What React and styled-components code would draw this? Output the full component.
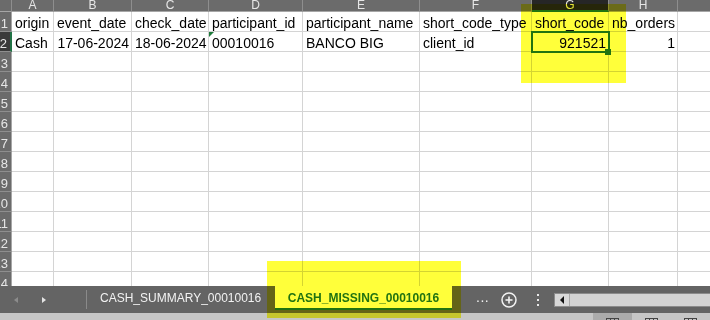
import React from "react";
import styled, { createGlobalStyle, css } from "styled-components";

const GREEN = "#217346";

const GlobalStyle = createGlobalStyle`
  html, body {
    margin: 0;
    padding: 0;
    background: #fff;
  }
  body {
    font-family: "Liberation Sans", Arial, sans-serif;
  }
`;

const Screen = styled.div`
  position: relative;
  width: 710px;
  height: 320px;
  overflow: hidden;
  display: flex;
  flex-direction: column;
  background: #fff;
`;

const Sheet = styled.div`
  flex: none;
  height: 286px;
  display: grid;
  grid-template-columns: 12px 42px 78px 77px 94px 117px 112px 77px 69px 80px;
  grid-template-rows: 12px;
  grid-auto-rows: 20px;
  overflow: hidden;
`;

const Corner = styled.div`
  background: #6b6b6b;
  border-right: 1px solid #8e8e8e;
  border-bottom: 1px solid #a6a6a6;
  box-sizing: border-box;
`;

const ColHead = styled.div`
  box-sizing: border-box;
  background: ${(p) => (p.$active ? "#262626" : "#6b6b6b")};
  color: #e6e6e6;
  font-size: 12px;
  line-height: 10px;
  text-align: center;
  overflow: hidden;
  border-right: 1px solid #8e8e8e;
  border-bottom: ${(p) => (p.$active ? `2px solid ${GREEN}` : "1px solid #a6a6a6")};
`;

const RowHead = styled.div`
  box-sizing: border-box;
  display: flex;
  justify-content: flex-end;
  padding: 3px 3px 0 0;
  background: ${(p) => (p.$active ? "#3a3a3a" : "#6b6b6b")};
  color: #e6e6e6;
  font-size: 13px;
  line-height: 17px;
  white-space: nowrap;
  overflow: hidden;
  border-bottom: 1px solid #8e8e8e;
  border-right: ${(p) => (p.$active ? `2px solid ${GREEN}` : "1px solid #a6a6a6")};
`;

const Cell = styled.div`
  position: relative;
  box-sizing: border-box;
  padding: 3px 2px 0 3px;
  border-right: 1px solid #d4d4d4;
  border-bottom: 1px solid #d4d4d4;
  font-size: 14px;
  line-height: 17px;
  color: #000;
  white-space: nowrap;
  text-align: ${(p) => (p.$num ? "right" : "left")};

  ${(p) =>
    p.$flag &&
    css`
      &::before {
        content: "";
        position: absolute;
        left: 0;
        top: 0;
        border-top: 5px solid #1e7a3c;
        border-right: 5px solid transparent;
      }
    `}

  ${(p) =>
    p.$selected &&
    css`
      z-index: 2;
      &::after {
        content: "";
        position: absolute;
        left: -1px;
        top: -1px;
        right: -2px;
        bottom: -2px;
        border: 2px solid ${GREEN};
      }
      &::before {
        content: "";
        position: absolute;
        right: -3px;
        bottom: -4px;
        width: 6px;
        height: 6px;
        background: ${GREEN};
        z-index: 1;
      }
    `}
`;

const Highlight = styled.div`
  position: absolute;
  left: ${(p) => p.$x}px;
  top: ${(p) => p.$y}px;
  width: ${(p) => p.$w}px;
  height: ${(p) => p.$h}px;
  background: #ffff3a;
  mix-blend-mode: multiply;
  pointer-events: none;
  z-index: 10;
`;

const TabBar = styled.div`
  flex: none;
  height: 27px;
  background: #646464;
  display: flex;
  align-items: center;
`;

const NavArea = styled.div`
  width: 86px;
  height: 27px;
  display: flex;
  align-items: center;
  gap: 24px;
  padding-left: 14px;
  box-sizing: border-box;
`;

const NavArrow = styled.span`
  width: 0;
  height: 0;
  border-top: 3.5px solid transparent;
  border-bottom: 3.5px solid transparent;
  ${(p) =>
    p.$dir === "left"
      ? css`border-right: 4px solid ${p.$dim ? "#8c8c8c" : "#e4e4e4"};`
      : css`border-left: 4px solid ${p.$dim ? "#8c8c8c" : "#e4e4e4"};`}
`;

const Divider = styled.span`
  width: 1px;
  height: 19px;
  background: #8a8a8a;
  align-self: flex-start;
  margin-top: 4px;
`;

const Tab = styled.div`
  align-self: flex-start;
  box-sizing: border-box;
  height: 24px;
  width: ${(p) => p.$w}px;
  padding: 1px 0 0 ${(p) => (p.$active ? 0 : 13)}px;
  font-size: 12px;
  line-height: 22px;
  white-space: nowrap;
  text-align: ${(p) => (p.$active ? "center" : "left")};
  color: ${(p) => (p.$active ? GREEN : "#f2f2f2")};
  font-weight: ${(p) => (p.$active ? 700 : 400)};
  background: ${(p) => (p.$active ? "#fff" : "transparent")};
  border-bottom: ${(p) => (p.$active ? `2px solid ${GREEN}` : "none")};
`;

const More = styled.span`
  margin-left: 24px;
  color: #f2f2f2;
  font-size: 14px;
  line-height: 14px;
  margin-top: -5px;
  letter-spacing: 0.5px;
`;

const AddSheet = styled.svg`
  margin-left: 12px;
  flex: none;
`;

const Kebab = styled.svg`
  margin-left: 19px;
  flex: none;
`;

const ScrollBar = styled.div`
  margin-left: 14px;
  flex: 1;
  height: 14px;
  box-sizing: border-box;
  display: flex;
  background: #d4d4d4;
  border: 1px solid #8c8c8c;
  border-right: none;
`;

const ScrollArrow = styled.div`
  width: 14px;
  display: flex;
  align-items: center;
  justify-content: center;
  border-right: 1px solid #a8a8a8;
  background: #d8d8d8;

  &::before {
    content: "";
    border-top: 4px solid transparent;
    border-bottom: 4px solid transparent;
    border-right: 4px solid #111;
  }
`;

const StatusBar = styled.div`
  flex: none;
  height: 7px;
  background: #c6c6c6;
  display: flex;
  justify-content: flex-end;
  overflow: hidden;
`;

const ViewButton = styled.div`
  width: 39px;
  flex: none;
  display: flex;
  justify-content: center;
  padding-top: 5px;
  box-sizing: border-box;
  background: ${(p) => (p.$active ? "#ababab" : "transparent")};
`;

const columns = ["A", "B", "C", "D", "E", "F", "G", "H", ""];

const header = [
  "origin",
  "event_date",
  "check_date",
  "participant_id",
  "participant_name",
  "short_code_type",
  "short_code",
  "nb_orders",
  "",
];

const record = [
  { v: "Cash" },
  { v: "17-06-2024", num: true },
  { v: "18-06-2024", num: true },
  { v: "00010016", flag: true },
  { v: "BANCO BIG" },
  { v: "client_id" },
  { v: "921521", num: true, selected: true },
  { v: "1", num: true },
  { v: "" },
];

const ViewIcon = () => (
  <svg width="13" height="10" viewBox="0 0 13 10">
    <rect x="0.5" y="0.5" width="12" height="9" fill="none" stroke="#444" />
    <line x1="4.5" y1="0" x2="4.5" y2="10" stroke="#444" />
    <line x1="8.5" y1="0" x2="8.5" y2="10" stroke="#444" />
  </svg>
);

export default function App() {
  const rows = Array.from({ length: 14 }, (_, i) => i + 1);

  return (
    <Screen>
      <GlobalStyle />
      <Sheet>
        <Corner />
        {columns.map((c, i) => (
          <ColHead key={i} $active={c === "G"}>
            {c}
          </ColHead>
        ))}
        {rows.map((r) => (
          <React.Fragment key={r}>
            <RowHead $active={r === 2}>{r}</RowHead>
            {columns.map((_, ci) => {
              if (r === 1) return <Cell key={ci}>{header[ci]}</Cell>;
              if (r === 2) {
                const d = record[ci];
                return (
                  <Cell key={ci} $num={d.num} $flag={d.flag} $selected={d.selected}>
                    {d.v}
                  </Cell>
                );
              }
              return <Cell key={ci} />;
            })}
          </React.Fragment>
        ))}
      </Sheet>

      <TabBar>
        <NavArea>
          <NavArrow $dir="left" $dim />
          <NavArrow $dir="right" />
        </NavArea>
        <Divider />
        <Tab $w={188}>CASH_SUMMARY_00010016</Tab>
        <Tab $w={177} $active>
          CASH_MISSING_00010016
        </Tab>
        <More>...</More>
        <AddSheet width="16" height="16" viewBox="0 0 16 16">
          <circle cx="8" cy="8" r="7" fill="none" stroke="#f2f2f2" strokeWidth="1.5" />
          <line x1="4.5" y1="8" x2="11.5" y2="8" stroke="#f2f2f2" strokeWidth="1.6" />
          <line x1="8" y1="4.5" x2="8" y2="11.5" stroke="#f2f2f2" strokeWidth="1.6" />
        </AddSheet>
        <Kebab width="4" height="14" viewBox="0 0 4 14">
          <rect x="1" y="1" width="2" height="2" fill="#e8e8e8" />
          <rect x="1" y="6" width="2" height="2" fill="#e8e8e8" />
          <rect x="1" y="11" width="2" height="2" fill="#e8e8e8" />
        </Kebab>
        <ScrollBar>
          <ScrollArrow />
        </ScrollBar>
      </TabBar>

      <StatusBar>
        <ViewButton $active>
          <ViewIcon />
        </ViewButton>
        <ViewButton>
          <ViewIcon />
        </ViewButton>
        <ViewButton>
          <ViewIcon />
        </ViewButton>
      </StatusBar>

      <Highlight $x={521} $y={4} $w={105} $h={79} />
      <Highlight $x={267} $y={261} $w={194} $h={57} />
    </Screen>
  );
}
